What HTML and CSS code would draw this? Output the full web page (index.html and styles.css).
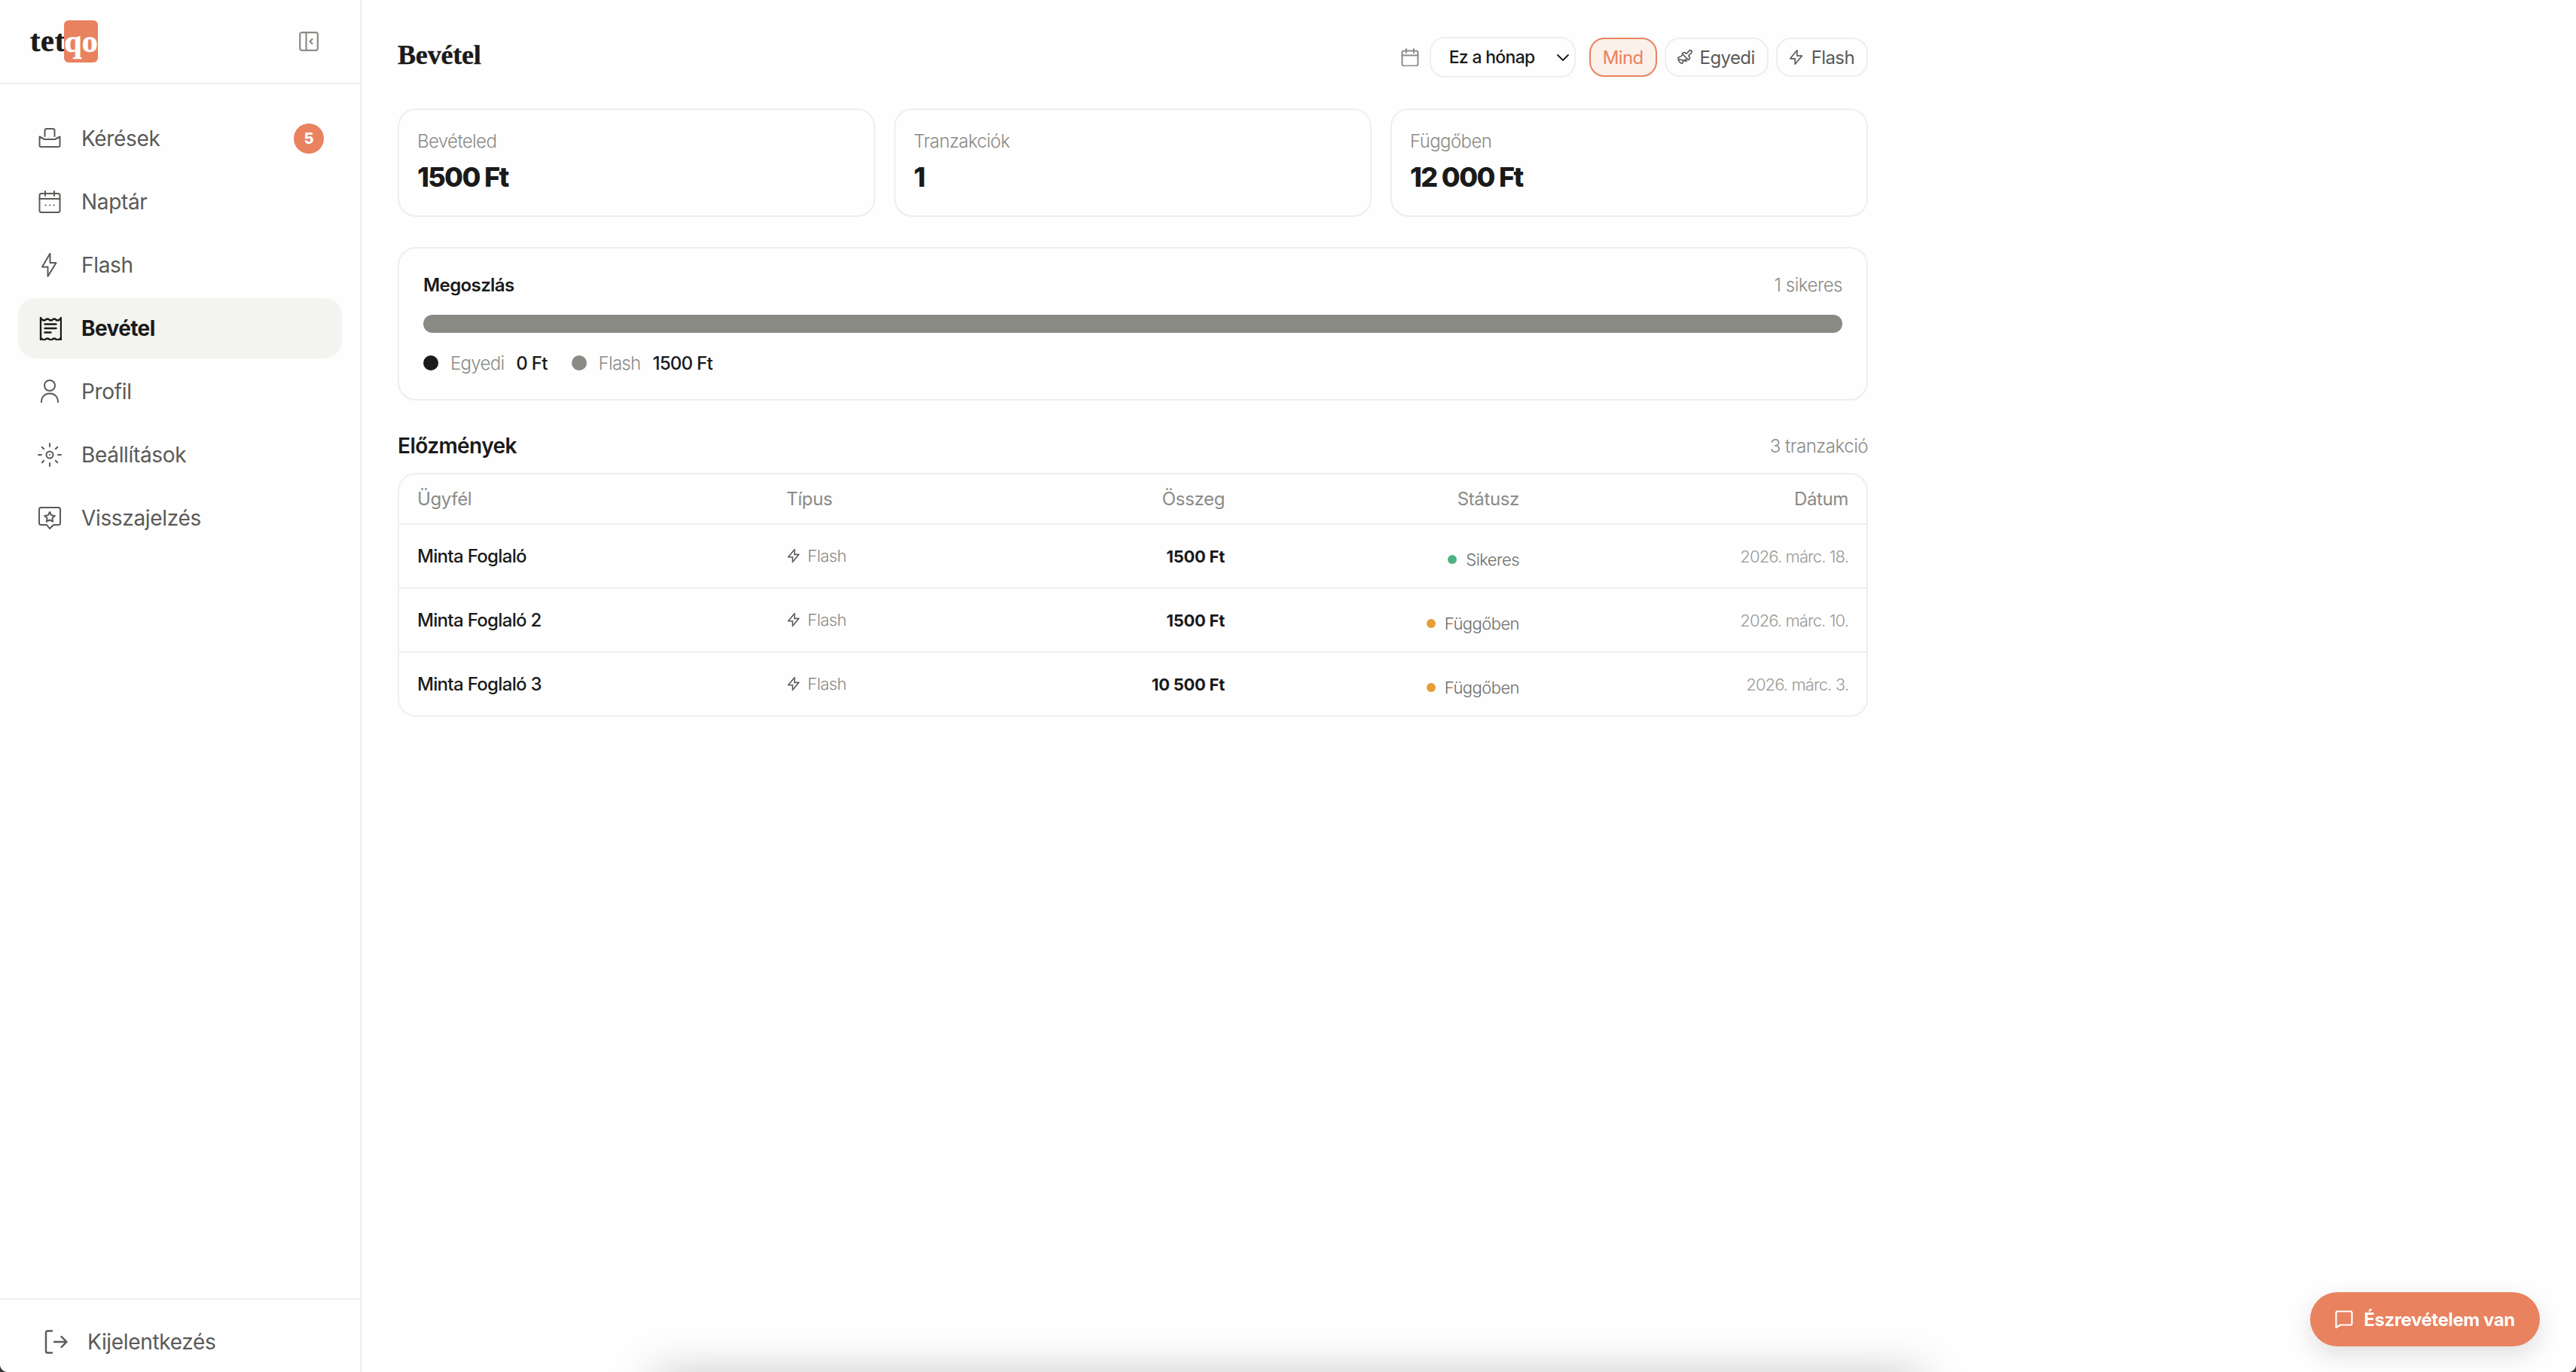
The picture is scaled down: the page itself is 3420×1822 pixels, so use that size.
FILE: index.html
```html
<!DOCTYPE html>
<html lang="hu">
<head>
<meta charset="utf-8">
<title>Bevétel</title>
<link rel="stylesheet" href="styles.css">
</head>
<body>
<div class="app">
  <aside class="sidebar">
    <div class="side-head">
      <div class="logo"><span class="logo-tet">tet</span><span class="logo-qo">qo</span></div>
      <svg class="collapse" viewBox="0 0 26 26" fill="none" stroke="currentColor" stroke-width="2.2" stroke-linecap="round" stroke-linejoin="round"><rect x="1.2" y="1.2" width="23.6" height="23.6" rx="2.5"/><path d="M9.5 1.2v23.6M17.5 10l-3 3 3 3"/></svg>
    </div>
    <nav class="nav">
      <a class="nav-item">
        <svg class="nav-icon" viewBox="0 0 32 32" fill="none" stroke="currentColor" stroke-width="2" stroke-linecap="round" stroke-linejoin="round"><path d="M9.5 13V5.500a2.500 2.500 0 0 1 2.500-2.500h8a2.500 2.500 0 0 1 2.500 2.500V13"/><path d="M2.500 13.500l6.500 3.500h14l6.500-3.500V25a2 2 0 0 1-2 2h-23a2 2 0 0 1-2-2z"/></svg>
        <span class="nav-label">Kérések</span>
        <span class="badge">5</span>
      </a>
      <a class="nav-item">
        <svg class="nav-icon" viewBox="0 0 32 32" fill="none" stroke="currentColor" stroke-width="2" stroke-linecap="round" stroke-linejoin="round"><rect x="2.500" y="5" width="27" height="25" rx="2.500"/><path d="M2.500 12h27M10 2v6M22 2v6M10.500 20.500h.1M16 20.500h.1M21.500 20.500h.1"/></svg>
        <span class="nav-label">Naptár</span>
      </a>
      <a class="nav-item">
        <svg class="nav-icon" viewBox="0 0 32 32" fill="none" stroke="currentColor" stroke-width="2" stroke-linecap="round" stroke-linejoin="round"><path d="M16.500 0.500v12.500h8L13.500 31V18.500h-7.500z"/></svg>
        <span class="nav-label">Flash</span>
      </a>
      <a class="nav-item active">
        <svg class="nav-icon" viewBox="0 0 32 32" fill="none" stroke="currentColor" stroke-width="2.400" stroke-linecap="round" stroke-linejoin="round"><path d="M4 2v29M31 2v29M4 3.500c2.250 0 2.250 2 4.500 2s2.250-2 4.500-2 2.250 2 4.500 2 2.250-2 4.500-2 2.250 2 4.500 2 2.250-2 4.500-2M4 29.500c2.250 0 2.250 2 4.500 2s2.250-2 4.500-2 2.250 2 4.500 2 2.250-2 4.500-2 2.250 2 4.500 2 2.250-2 4.500-2M9.500 10.500h15M9.500 16h15M9.500 21.500h8"/></svg>
        <span class="nav-label">Bevétel</span>
      </a>
      <a class="nav-item">
        <svg class="nav-icon" viewBox="0 0 32 32" fill="none" stroke="currentColor" stroke-width="2" stroke-linecap="round" stroke-linejoin="round"><circle cx="16" cy="8" r="7"/><path d="M5 30c0-7 4.500-11.500 11-11.500S27 23 27 30"/></svg>
        <span class="nav-label">Profil</span>
      </a>
      <a class="nav-item">
        <svg class="nav-icon" viewBox="0 0 32 32" fill="none" stroke="currentColor" stroke-width="2" stroke-linecap="round" stroke-linejoin="round"><circle cx="16" cy="16" r="4.500"/><path d="M16 15.900v.2M16 1v4M16 27v4M1 16h4M27 16h4M5.700 5.700l2.500 2.500M23.800 23.800l2.500 2.500M5.700 26.300l2.500-2.500M23.800 8.200l2.500-2.500"/></svg>
        <span class="nav-label">Beállítások</span>
      </a>
      <a class="nav-item">
        <svg class="nav-icon" viewBox="0 0 32 32" fill="none" stroke="currentColor" stroke-width="2" stroke-linecap="round" stroke-linejoin="round"><path d="M4.500 2h23a2.500 2.500 0 0 1 2.500 2.500v18a2.500 2.500 0 0 1-2.500 2.500H21l-5 5-4-5H4.500A2.500 2.500 0 0 1 2 22.500v-18A2.500 2.500 0 0 1 4.500 2z"/><path d="M16 8l2.200 4.200 4.600.7-3.400 3.200.8 4.600-4.200-2.200-4.200 2.200.8-4.600-3.400-3.200 4.600-.7z"/></svg>
        <span class="nav-label">Visszajelzés</span>
      </a>
    </nav>
    <div class="side-foot">
      <svg class="logout-icon" viewBox="0 0 32 32" fill="none" stroke="currentColor" stroke-width="2.400" stroke-linecap="round" stroke-linejoin="round"><path d="M11 1.500H5A2 2 0 0 0 3 3.500v25a2 2 0 0 0 2 2h6M14 16h16M23.500 9l7 7-7 7"/></svg>
      <span class="nav-label">Kijelentkezés</span>
    </div>
  </aside>

  <main class="main">
    <header class="page-head">
      <h1 class="page-title">Bevétel</h1>
      <div class="filters">
        <svg class="cal-icon" viewBox="0 0 24 24" fill="none" stroke="currentColor" stroke-width="2" stroke-linecap="round" stroke-linejoin="round"><rect x="1.500" y="3.500" width="21" height="20" rx="2.500"/><path d="M1.500 9.500h21M7 1v5M17 1v5"/></svg>
        <div class="select"><span>Ez a hónap</span><svg class="chev" viewBox="0 0 18 11" fill="none" stroke="currentColor" stroke-width="1.800" stroke-linecap="round" stroke-linejoin="round"><path d="M2 2l7 7 7-7"/></svg></div>
        <div class="chip chip-active">Mind</div>
        <div class="chip">
          <svg class="chip-icon" viewBox="0 0 24 24" fill="none" stroke="currentColor" stroke-width="1.800" stroke-linecap="round" stroke-linejoin="round"><path d="M14.600 17.900 3.900 15M18.400 2.600a2.100 2.100 0 1 1 3 3l-4 4a.5.500 0 0 0 0 .75l.94.94a2.400 2.400 0 0 1 0 3.400l-.94.94a.5.500 0 0 1-.7 0L8.350 7.350a.5.500 0 0 1 0-.7l.94-.95a2.400 2.400 0 0 1 3.400 0l.95.95a.5.500 0 0 0 .7 0z"/><path d="M9 8c-1.800 2.700-4 3.750-6.600 4.400a.5.500 0 0 0-.35.46C2.100 17.100 5.300 21 8 21a.5.500 0 0 0 .5-.5c0-2 1.500-4.500 6.500-5.500"/></svg>
          Egyedi
        </div>
        <div class="chip">
          <svg class="chip-icon" viewBox="0 0 24 24" fill="none" stroke="currentColor" stroke-width="1.800" stroke-linecap="round" stroke-linejoin="round"><path d="M13 2v8h7L10 22v-8H3z"/></svg>
          Flash
        </div>
      </div>
    </header>

    <section class="stats">
      <div class="card stat"><div class="stat-label">Bevételed</div><div class="stat-value">1500 Ft</div></div>
      <div class="card stat"><div class="stat-label">Tranzakciók</div><div class="stat-value">1</div></div>
      <div class="card stat"><div class="stat-label">Függőben</div><div class="stat-value">12 000 Ft</div></div>
    </section>

    <section class="card split">
      <div class="split-head"><span class="split-title">Megoszlás</span><span class="muted">1 sikeres</span></div>
      <div class="bar"><div class="bar-fill" style="width:100%"></div></div>
      <div class="legend">
        <span class="legend-item"><i class="dot dot-dark"></i><span class="muted">Egyedi</span><b class="legend-val">0 Ft</b></span>
        <span class="legend-item"><i class="dot dot-gray"></i><span class="muted">Flash</span><b class="legend-val">1500 Ft</b></span>
      </div>
    </section>

    <div class="history-head"><h2 class="history-title">Előzmények</h2><span class="muted">3 tranzakció</span></div>

    <div class="table-wrap">
      <table class="table">
        <colgroup><col class="c1"><col class="c2"><col class="c3"><col class="c4"><col class="c5"></colgroup>
        <thead><tr><th>Ügyfél</th><th>Típus</th><th class="r">Összeg</th><th class="r">Státusz</th><th class="r">Dátum</th></tr></thead>
        <tbody>
          <tr>
            <td class="name">Minta Foglaló</td>
            <td><span class="type"><svg class="type-icon" viewBox="0 0 24 24" fill="none" stroke="currentColor" stroke-width="1.900" stroke-linecap="round" stroke-linejoin="round"><path d="M13 2v8h7L10 22v-8H3z"/></svg>Flash</span></td>
            <td class="r amount">1500 Ft</td>
            <td class="r status"><span class="state"><i class="sdot sdot-ok"></i>Sikeres</span></td>
            <td class="r date">2026. márc. 18.</td>
          </tr>
          <tr>
            <td class="name">Minta Foglaló 2</td>
            <td><span class="type"><svg class="type-icon" viewBox="0 0 24 24" fill="none" stroke="currentColor" stroke-width="1.900" stroke-linecap="round" stroke-linejoin="round"><path d="M13 2v8h7L10 22v-8H3z"/></svg>Flash</span></td>
            <td class="r amount">1500 Ft</td>
            <td class="r status"><span class="state"><i class="sdot sdot-wait"></i>Függőben</span></td>
            <td class="r date">2026. márc. 10.</td>
          </tr>
          <tr>
            <td class="name">Minta Foglaló 3</td>
            <td><span class="type"><svg class="type-icon" viewBox="0 0 24 24" fill="none" stroke="currentColor" stroke-width="1.900" stroke-linecap="round" stroke-linejoin="round"><path d="M13 2v8h7L10 22v-8H3z"/></svg>Flash</span></td>
            <td class="r amount">10 500 Ft</td>
            <td class="r status"><span class="state"><i class="sdot sdot-wait"></i>Függőben</span></td>
            <td class="r date">2026. márc. 3.</td>
          </tr>
        </tbody>
      </table>
    </div>
  </main>
</div>

<div class="drawer-edge"></div>

<button class="feedback">
  <svg class="feedback-icon" viewBox="0 0 24 24" fill="none" stroke="currentColor" stroke-width="2.200" stroke-linecap="round" stroke-linejoin="round"><path d="M1.500 3.500a2 2 0 0 1 2-2h17a2 2 0 0 1 2 2v14a2 2 0 0 1-2 2H7l-5.500 3.500z"/></svg>
  Észrevételem van
</button>
</body>
</html>
```

FILE: styles.css
```css
* { box-sizing: border-box; }
html, body { margin: 0; height: 100%; }
body {
  background: #fefefe;
  color: #1a1a1a;
  font-family: Inter, "Liberation Sans", sans-serif;
  overflow: hidden;
}
/* window's rounded bottom corners */
body::before, body::after {
  content: "";
  position: fixed;
  bottom: 0;
  width: 10px;
  height: 10px;
  z-index: 5;
}
body::before { left: 0; background: radial-gradient(circle at 100% 0, transparent 9.500px, #333 10.500px); }
body::after { right: 0; background: radial-gradient(circle at 0 0, transparent 9.500px, #333 10.500px); }
.app { display: flex; height: 100vh; }

/* Sidebar */
.sidebar {
  width: 480px;
  flex: none;
  display: flex;
  flex-direction: column;
  border-right: 2px solid #eeeeec;
}
.side-head {
  height: 112px;
  flex: none;
  display: flex;
  align-items: center;
  justify-content: space-between;
  padding: 0 55px 0 40px;
  border-bottom: 2px solid #eeeeec;
}
.logo {
  display: flex;
  align-items: center;
  font-family: "Liberation Serif", serif;
  font-weight: 700;
  font-size: 40px;
  line-height: 56px;
  -webkit-text-stroke: 0.6px currentColor;
}
.logo-tet { color: #1a1a1a; width: 45px; letter-spacing: 0.02em; }
.logo-qo {
  width: 45px;
  height: 56px;
  background: #e9825f;
  color: #fff;
  border-radius: 6px;
  text-align: center;
  font-size: 42px;
}
.collapse { width: 26px; height: 26px; color: #8b8b87; }
.nav {
  flex: 1;
  display: flex;
  flex-direction: column;
  gap: 4px;
  padding: 32px 24px 0;
}
.nav-item {
  height: 80px;
  display: flex;
  align-items: center;
  gap: 26px;
  padding: 0 24px 0 26px;
  border-radius: 24px;
  color: #5a5a57;
}
.nav-item.active {
  background: #f3f3ef;
  color: #1a1a1a;
  font-weight: 700;
}
.nav-icon { width: 32px; height: 32px; flex: none; }
.nav-label {
  font-size: 28px;
  letter-spacing: -0.012em;
  font-weight: 430;
}
.active .nav-label { font-weight: 700; letter-spacing: -0.022em; }
.badge {
  margin-left: auto;
  width: 40px;
  height: 40px;
  border-radius: 50%;
  background: #e9825f;
  color: #fff;
  font-size: 20px;
  font-weight: 800;
  display: flex;
  align-items: center;
  justify-content: center;
}
.side-foot {
  height: 98px;
  flex: none;
  display: flex;
  align-items: center;
  gap: 26px;
  padding: 16px 0 0 58px;
  border-top: 2px solid #eeeeec;
  color: #5a5a57;
}
.logout-icon { width: 32px; height: 32px; flex: none; }

/* Main */
.main { width: 2048px; padding: 48px 48px 0; flex: none; }
.page-head {
  display: flex;
  align-items: center;
  justify-content: space-between;
  height: 56px;
  margin-bottom: 40px;
}
.page-title {
  margin: 0 0 6px;
  font-family: "Liberation Serif", serif;
  font-size: 36px;
  font-weight: 700;
  letter-spacing: -0.005em;
  line-height: 44px;
  -webkit-text-stroke: 0.4px currentColor;
}
.filters { display: flex; align-items: center; gap: 10px; }
.cal-icon { width: 24px; height: 24px; color: #8b8b87; margin-right: 4px; }
.select {
  width: 194px;
  height: 54px;
  display: flex;
  align-items: center;
  justify-content: space-between;
  padding: 0 6px 0 24px;
  border: 2px solid #eeeeec;
  border-radius: 20px;
  font-size: 23px;
  font-weight: 500;
  letter-spacing: -0.03em;
  margin-right: 8px;
}
.chev { width: 18px; height: 11px; }
.chip {
  height: 52px;
  display: flex;
  align-items: center;
  gap: 9px;
  padding: 0 16px 0 14px;
  border: 2px solid #eeeeec;
  border-radius: 20px;
  font-size: 24px;
  letter-spacing: -0.025em;
  color: #5a5a57;
}
.chip-active {
  color: #e9825f;
  background: #fcf0ea;
  border-color: #e9825f;
  padding: 0 16px;
}
.chip-icon { width: 22px; height: 22px; flex: none; }

.card { border: 2px solid #eeeeec; border-radius: 24px; background: #fefefe; }
.stats { display: grid; grid-template-columns: repeat(3, 1fr); gap: 25px; margin-bottom: 40px; }
.stat { height: 144px; padding: 26px 24px; }
.stat-label { font-size: 24px; line-height: 32px; color: #8b8b87; letter-spacing: -0.025em; font-weight: 300; }
.stat-value { font-size: 36px; line-height: 44px; font-weight: 800; letter-spacing: -0.045em; margin-top: 9px; }
.muted { color: #8b8b87; font-size: 24px; letter-spacing: -0.02em; font-weight: 300; }

.split { height: 204px; padding: 32px 32px 0; }
.split-head { display: flex; justify-content: space-between; align-items: center; height: 32px; margin-bottom: 24px; }
.split-title { font-size: 24px; font-weight: 600; letter-spacing: -0.025em; }
.bar { height: 24px; border-radius: 12px; background: #eeeeec; overflow: hidden; margin-bottom: 24px; }
.bar-fill { height: 100%; background: #8a8a85; }
.legend { display: flex; align-items: center; gap: 32px; height: 32px; }
.legend-item { display: flex; align-items: center; gap: 16px; }
.legend-item .muted { letter-spacing: -0.03em; }
.dot { width: 20px; height: 20px; border-radius: 50%; flex: none; }
.dot-dark { background: #1a1a1a; }
.dot-gray { background: #8a8a85; }
.legend-val { font-size: 24px; font-weight: 500; letter-spacing: -0.03em; }

.history-head { display: flex; align-items: center; justify-content: space-between; height: 40px; margin: 40px 0 16px; }
.history-title { margin: 0; font-size: 28px; font-weight: 600; letter-spacing: -0.02em; }

.table-wrap { border: 2px solid #eeeeec; border-radius: 24px; overflow: hidden; height: 324px; }
.table { width: 100%; border-collapse: collapse; table-layout: fixed; }
.c1 { width: 490px; } .c2 { width: 330px; } .c3 { width: 300px; } .c4 { width: 391px; } .c5 { width: 437px; }
.table th {
  height: 66px;
  padding: 0 24px;
  text-align: left;
  font-size: 24px;
  font-weight: 400;
  color: #8b8b87;
  letter-spacing: -0.015em;
  border-bottom: 2px solid #eeeeec;
}
.table td { height: 85px; padding: 0 24px; border-bottom: 2px solid #eeeeec; font-size: 22px; }
.table tr:last-child td { border-bottom: 0; height: 84px; }
.table .r { text-align: right; }
.table .name { font-size: 24px; font-weight: 500; letter-spacing: -0.028em; }
.type { display: inline-flex; align-items: center; gap: 8px; color: #8b8b87; letter-spacing: -0.025em; font-weight: 300; }
.type-icon { width: 20px; height: 20px; color: #5a5a57; }
.amount { font-weight: 700; letter-spacing: -0.012em; }
.table .status { padding-top: 6px; }
.state { display: inline-flex; align-items: center; gap: 12px; color: #6d6d6a; font-weight: 300; letter-spacing: -0.025em; }
.sdot { width: 12px; height: 12px; border-radius: 50%; }
.sdot-ok { background: #4fb286; }
.sdot-wait { background: #e79d38; }
.table .date { color: #9a9a96; font-weight: 300; letter-spacing: -0.04em; font-size: 22px; }

/* Overlays */
.drawer-edge {
  position: fixed;
  left: 870px;
  top: 1830px;
  width: 1680px;
  height: 100px;
  box-shadow: 0 -6px 60px rgba(0,0,0,.22);
}
.feedback {
  position: fixed;
  right: 48px;
  bottom: 34px;
  height: 72px;
  width: 305px;
  border: 0;
  border-radius: 36px;
  background: #e9825f;
  color: #fff;
  display: flex;
  align-items: center;
  justify-content: center;
  gap: 14px;
  font-family: inherit;
  font-size: 24px;
  font-weight: 700;
  letter-spacing: -0.018em;
  box-shadow: 0 12px 32px rgba(0,0,0,.12);
}
.feedback-icon { width: 24px; height: 24px; flex: none; }
```
